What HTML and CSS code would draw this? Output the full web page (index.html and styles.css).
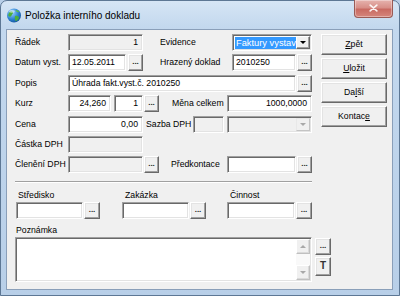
FILE: index.html
```html
<!DOCTYPE html>
<html>
<head>
<meta charset="utf-8">
<link rel="stylesheet" href="styles.css">
</head>
<body>
<div class="window">
  <div class="titlebar">
    <svg class="app-icon" viewBox="0 0 16 16">
      <defs>
        <radialGradient id="g" cx="0.35" cy="0.3" r="0.8">
          <stop offset="0" stop-color="#9fd4ff"/>
          <stop offset="0.6" stop-color="#2a7fd0"/>
          <stop offset="1" stop-color="#13508f"/>
        </radialGradient>
      </defs>
      <circle cx="8" cy="8.5" r="7" fill="url(#g)"/>
      <path d="M3 6 C4 4 6 4 7 5 C7.5 6.5 6 7 5.5 8.5 C5 10 3.5 10 2.5 9 C2 8 2.4 7 3 6Z" fill="#4caf3a"/>
      <path d="M9 9 C10.5 8.5 12.5 9 13 10.5 C12.5 12.5 11 14 9.5 14 C9 12.5 8.5 11 9 9Z" fill="#4caf3a"/>
      <path d="M9.5 3 C11 2.8 12.5 3.6 13.3 5 C12 5.6 10.5 5.2 9.5 3Z" fill="#5cbf48"/>
      <ellipse cx="6" cy="4.5" rx="3" ry="1.4" fill="#fff" opacity="0.45"/>
    </svg>
    <span class="title">Položka interního dokladu</span>
    <div class="close">
      <svg viewBox="0 0 39 17" class="close-x"><path d="M16 5 L23 11 M23 5 L16 11" stroke="#fff" stroke-opacity="0.9" stroke-width="1.8" stroke-linecap="round"/></svg>
    </div>
  </div>
  <div class="client">
    <div class="top">
      <div class="form">
        <div class="row">
          <span class="lbl w53">Řádek</span>
          <span class="fld dis num w75">1</span>
          <span class="lbl ml17 w72">Evidence</span>
          <span class="combo w80"><span class="combo-text">Faktury vystav</span><span class="dd"><i class="tri"></i></span></span>
        </div>
        <div class="row g4">
          <span class="lbl w53">Datum vyst.</span>
          <span class="fld w58">12.05.2011</span>
          <span class="dots ml2">...</span>
          <span class="lbl ml17 w72">Hrazený doklad</span>
          <span class="fld w64">2010250</span>
          <span class="dots ml1">...</span>
        </div>
        <div class="row">
          <span class="lbl w53">Popis</span>
          <span class="fld w228">Úhrada fakt.vyst.č. 2010250</span>
          <span class="dots ml1">...</span>
        </div>
        <div class="row g4">
          <span class="lbl w53">Kurz</span>
          <span class="fld num w43">24,260</span>
          <span class="fld num w29 ml3">1</span>
          <span class="dots ml1">...</span>
          <span class="lbl ml13 w55">Měna celkem</span>
          <span class="fld num w85">1000,0000</span>
        </div>
        <div class="row">
          <span class="lbl w53">Cena</span>
          <span class="fld num w75">0,00</span>
          <span class="lbl ml3 w47">Sazba DPH</span>
          <span class="fld dis w31"></span>
          <span class="combo dis-combo w85 ml3"><span class="combo-text plain"></span><span class="dd dd-dis"><i class="tri tri-dis"></i></span></span>
        </div>
        <div class="row">
          <span class="lbl w53">Částka DPH</span>
          <span class="fld dis w75"></span>
        </div>
        <div class="row last">
          <span class="lbl w53">Členění DPH</span>
          <span class="fld dis w75"></span>
          <span class="dots ml1">...</span>
          <span class="lbl ml12 w56">Předkontace</span>
          <span class="fld w69">&nbsp;</span>
          <span class="dots ml1">...</span>
        </div>
      </div>
      <div class="actions">
        <button class="btn"><u>Z</u>pět</button>
        <button class="btn"><u>U</u>ložit</button>
        <button class="btn">Da<u>l</u>ší</button>
        <button class="btn">Kontac<u>e</u></button>
      </div>
    </div>
    <div class="sep"></div>
    <div class="cols">
      <div class="col c1">
        <div class="col-lbl">Středisko</div>
        <div class="col-fields"><span class="fld w67"></span><span class="dots w16">...</span></div>
      </div>
      <div class="col c2">
        <div class="col-lbl l3">Zakázka</div>
        <div class="col-fields"><span class="fld w67"></span><span class="dots w16">...</span></div>
      </div>
      <div class="col">
        <div class="col-lbl l3">Činnost</div>
        <div class="col-fields"><span class="fld w68"></span><span class="dots w16">...</span></div>
      </div>
    </div>
    <div class="pozn-lbl">Poznámka</div>
    <div class="memo-row">
      <div class="memo">
        <div class="memo-body"></div>
        <div class="vscroll">
          <span class="sbtn"><i class="tri-up"></i></span>
          <span class="sbtn"><i class="tri-dn"></i></span>
        </div>
      </div>
      <div class="memo-side">
        <span class="dots w16">...</span>
        <span class="dots w16 tbtn">T</span>
      </div>
    </div>
  </div>
</div>
</body>
</html>
```

FILE: styles.css
```css
* { box-sizing: border-box; }

body {
  margin: 0;
  width: 400px;
  height: 296px;
  overflow: hidden;
  font-family: "Liberation Sans", Arial, sans-serif;
  font-size: 8.7px;
  color: #000;
  background: #b9cfe8;
}

.window {
  width: 400px;
  height: 296px;
  border: 1px solid #5d7794;
  border-radius: 7px 7px 0 0;
  background: linear-gradient(180deg, #d6e5f5 0, #c3d8ee 26px, #b8cfe8 100%);
  display: flex;
  flex-direction: column;
  padding: 0 6px 5px 5px;
}

.titlebar {
  height: 28px;
  flex-shrink: 0;
  display: flex;
  align-items: center;
}

.app-icon {
  width: 16px;
  height: 16px;
  flex-shrink: 0;
}

.title {
  margin-left: 3px;
  font-size: 10px;
  color: #000;
  white-space: nowrap;
}

.close {
  margin-left: auto;
  align-self: flex-start;
  margin-top: -1px;
  width: 39px;
  height: 18px;
  border: 1px solid #9a5a55;
  border-top: none;
  border-radius: 0 0 4px 4px;
  background: linear-gradient(180deg, #e6b3ae 0, #d88f88 45%, #c96a62 55%, #d5857c 100%);
  box-shadow: inset 0 0 0 1px rgba(255, 255, 255, 0.35);
}

.close-x {
  display: block;
  width: 37px;
  height: 17px;
}

.client {
  flex: 1;
  background: #f0f0f0;
  border: 1px solid #8a9fb9;
  padding: 0 0 0 8px;
  display: flex;
  flex-direction: column;
}

.top {
  display: flex;
  padding-top: 4px;
}

.form {
  width: 297px;
}

.row {
  display: flex;
  height: 17px;
  margin-bottom: 3px;
}

.row.g4 { margin-bottom: 4px; }
.row.last { margin-bottom: 0; }

.lbl {
  line-height: 17px;
  white-space: nowrap;
  flex-shrink: 0;
}

.fld {
  height: 17px;
  line-height: 15px;
  padding: 0 3px;
  background: #fff;
  border: 1px solid;
  border-color: #a0a0a0 #fff #fff #a0a0a0;
  box-shadow: inset 1px 1px #696969, inset -1px -1px #e3e3e3;
  white-space: nowrap;
  overflow: hidden;
  flex-shrink: 0;
}

.fld.dis { background: #f0f0f0; }
.fld.num { text-align: right; padding-right: 4px; }

.dots {
  width: 15px;
  height: 17px;
  flex-shrink: 0;
  background: #f0f0f0;
  border: 1px solid;
  border-color: #fff #696969 #696969 #fff;
  box-shadow: inset -1px -1px #a0a0a0, inset 1px 1px #e3e3e3;
  font-size: 8px;
  font-weight: bold;
  text-align: center;
  line-height: 13px;
  color: #222;
}

.combo {
  display: flex;
  height: 17px;
  flex-shrink: 0;
  background: #fff;
  border: 1px solid;
  border-color: #a0a0a0 #fff #fff #a0a0a0;
  box-shadow: inset 1px 1px #696969, inset -1px -1px #e3e3e3;
  padding: 2px 1px 1px 2px;
}

.combo-text {
  flex: 1;
  background: #3399ff;
  color: #fff;
  line-height: 12px;
  padding-left: 1px;
  white-space: nowrap;
  overflow: hidden;
  font-size: 9.3px;
}

.combo-text.plain { background: transparent; }

.dis-combo { background: #f0f0f0; }

.dd {
  width: 14px;
  margin-top: -1px;
  margin-bottom: 0;
  flex-shrink: 0;
  background: #f0f0f0;
  border: 1px solid;
  border-color: #fff #696969 #696969 #fff;
  box-shadow: inset -1px -1px #a0a0a0;
  display: flex;
  align-items: center;
  justify-content: center;
}

.dd-dis {
  border-color: #e8e8e8 #c4c4c4 #c4c4c4 #e8e8e8;
  box-shadow: none;
}

.tri {
  width: 0;
  height: 0;
  border-left: 3px solid transparent;
  border-right: 3px solid transparent;
  border-top: 3px solid #000;
}

.tri-dis { border-top-color: #a8a8a8; }

.actions {
  margin-left: 9px;
  width: 66px;
  display: flex;
  flex-direction: column;
  gap: 3px;
}

.btn {
  height: 21px;
  padding: 0;
  font: inherit;
  color: #000;
  background: #f0f0f0;
  border: 1px solid;
  border-color: #fff #696969 #696969 #fff;
  box-shadow: inset -1px -1px #a0a0a0, inset 1px 1px #e3e3e3;
  text-align: center;
  line-height: 17px;
}

.sep {
  width: 297px;
  height: 2px;
  margin-top: 8px;
  border-top: 1px solid #a0a0a0;
  border-bottom: 1px solid #fff;
}

.cols {
  display: flex;
  margin-top: 6px;
  padding-left: 1px;
}

.col.c1 { width: 106px; }
.col.c2 { width: 105px; }

.col-lbl {
  line-height: 12px;
  margin-bottom: 1px;
  padding-left: 2px;
}

.col-lbl.l3 { padding-left: 3px; }

.col-fields {
  display: flex;
  gap: 1px;
}

.pozn-lbl {
  margin-top: 5px;
  line-height: 12px;
  padding-left: 1px;
}

.memo-row {
  display: flex;
  margin-top: 1px;
}

.memo {
  width: 297px;
  height: 45px;
  display: flex;
  background: #fff;
  border: 1px solid;
  border-color: #a0a0a0 #fff #fff #a0a0a0;
  box-shadow: inset 1px 1px #696969, inset -1px -1px #e3e3e3;
  padding: 1px;
}

.memo-body { flex: 1; }

.vscroll {
  width: 14px;
  display: flex;
  flex-direction: column;
  justify-content: space-between;
  background: #f9f9f9;
}

.sbtn {
  height: 15px;
  background: #f0f0f0;
  border: 1px solid;
  border-color: #fff #c0c0c0 #c0c0c0 #fff;
  box-shadow: inset -1px -1px #dadada;
  display: flex;
  align-items: center;
  justify-content: center;
}

.tri-up {
  width: 0;
  height: 0;
  border-left: 3px solid transparent;
  border-right: 3px solid transparent;
  border-bottom: 3px solid #a8a8a8;
}

.tri-dn {
  width: 0;
  height: 0;
  border-left: 3px solid transparent;
  border-right: 3px solid transparent;
  border-top: 3px solid #a8a8a8;
}

.memo-side {
  margin-left: 3px;
  margin-top: 1px;
  display: flex;
  flex-direction: column;
  gap: 2px;
}

.tbtn {
  height: 19px;
  font-size: 10px;
  line-height: 16px;
  font-weight: bold;
  color: #333;
}

.w16 { width: 16px; }
.w29 { width: 29px; }
.w31 { width: 31px; }
.w43 { width: 43px; }
.w47 { width: 47px; }
.w53 { width: 53px; }
.w55 { width: 55px; }
.w56 { width: 56px; }
.w58 { width: 58px; }
.w64 { width: 64px; }
.w67 { width: 67px; }
.w68 { width: 68px; }
.w69 { width: 69px; }
.w72 { width: 72px; }
.w75 { width: 75px; }
.w80 { width: 80px; }
.w85 { width: 85px; }
.w228 { width: 228px; }

.ml1 { margin-left: 1px; }
.ml2 { margin-left: 2px; }
.ml3 { margin-left: 3px; }
.ml12 { margin-left: 12px; }
.ml13 { margin-left: 13px; }
.ml17 { margin-left: 17px; }
```
